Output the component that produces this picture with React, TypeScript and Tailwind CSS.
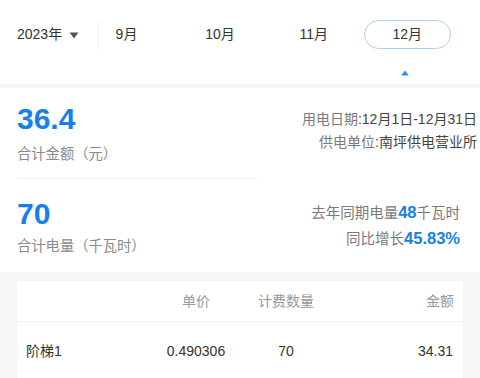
const font = { fontFamily: '"Liberation Sans", "Noto Sans CJK SC", sans-serif' };

const months = ["9月", "10月", "11月", "12月"];

export default function App() {
  const active = "12月";

  return (
    <div className="w-[480px] h-[378px] overflow-hidden bg-[#f6f6f6]" style={font}>
      {/* month selector */}
      <header className="h-[84px] bg-white flex flex-col">
        <div className="flex items-center h-[68px] pt-[1px]">
          <div className="flex items-center pl-[17px] w-[98px] text-[14px] text-[#333]">
            <span>2023年</span>
            <svg width="10" height="7" viewBox="0 0 10 7" className="ml-[7px] mt-[1px]">
              <path d="M0.5 0.5h9L5 6.5z" fill="#555" />
            </svg>
          </div>
          <div className="w-px h-[28px] bg-[#f0f0f0]" />
          <div className="flex ml-[-16px] gap-[6.6px]">
            {months.map((m) => (
              <div
                key={m}
                className={`w-[87px] h-[29px] flex items-center justify-center rounded-full text-[14px] text-[#333] ${
                  m === active ? "border border-[#a9d2f4]" : "border border-transparent"
                }`}
              >
                {m}
              </div>
            ))}
          </div>
        </div>
        <div className="flex justify-end pr-[71px] pt-[2px]">
          <svg width="8" height="6" viewBox="0 0 8 6">
            <path d="M4 0.5L7.8 5.5H0.2z" fill="#2d8cf0" />
          </svg>
        </div>
      </header>

      {/* summary */}
      <section className="mt-[4px] bg-white">
        <div className="flex justify-between items-start">
          <div className="pl-[17px] pt-[16px] pb-[14px]">
            <div className="text-[30px] leading-[30px] font-semibold text-[#1580e8]">36.4</div>
            <div className="mt-[10px] text-[14.3px] leading-[20px] text-[#8a8a8a]">合计金额（元）</div>
          </div>
          <div className="pt-[20px] pr-[3px] text-right text-[14px] leading-[23px]">
            <div>
              <span className="text-[#7a7a7a]">用电日期</span>
              <span className="text-[#444]">:12月1日-12月31日</span>
            </div>
            <div>
              <span className="text-[#7a7a7a]">供电单位</span>
              <span className="text-[#444]">:南坪供电营业所</span>
            </div>
          </div>
        </div>
        <div className="ml-[17px] w-[241px] h-px bg-[#f1f1f1]" />
        <div className="flex justify-between items-start">
          <div className="pl-[17px] pt-[20px] pb-[16px]">
            <div className="text-[30px] leading-[30px] font-semibold text-[#1580e8]">70</div>
            <div className="mt-[7px] text-[14.3px] leading-[20px] text-[#8a8a8a]">合计电量（千瓦时）</div>
          </div>
          <div className="pt-[21px] pr-[20px] text-right text-[14.5px] leading-[25px] text-[#7a7a7a]">
            <div>
              去年同期电量<span className="text-[16.5px] font-bold text-[#1580e8]">48</span>千瓦时
            </div>
            <div>
              同比增长<span className="text-[16.5px] font-bold text-[#1580e8]">45.83%</span>
            </div>
          </div>
        </div>
      </section>

      {/* tier table */}
      <section className="px-[17px] pt-[9px]">
        <div className="bg-white">
          <div className="grid grid-cols-[133px_92px_88px_1fr] items-center h-[41px] border-b border-[#f0f0f0] text-[14px] text-[#999]">
            <div />
            <div className="text-center">单价</div>
            <div className="text-center">计费数量</div>
            <div className="text-right pr-[9px]">金额</div>
          </div>
          <div className="grid grid-cols-[133px_92px_88px_1fr] items-center h-[58px] text-[14px] text-[#333]">
            <div className="pl-[9px]">阶梯1</div>
            <div className="text-center">0.490306</div>
            <div className="text-center">70</div>
            <div className="text-right pr-[10px]">34.31</div>
          </div>
        </div>
      </section>
    </div>
  );
}
